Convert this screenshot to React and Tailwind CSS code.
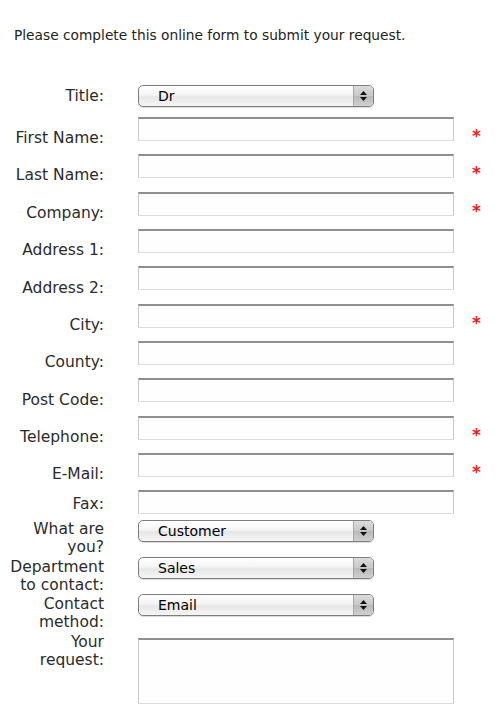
import React from "react";

const font = { fontFamily: '"DejaVu Sans", Verdana, sans-serif' };

function TextInput() {
  return (
    <div className="w-[316px] h-[24px] bg-[#fefefe] border border-[#c9c9c9] border-t-2 border-t-[#8f8f8f] border-b-[#dcdcdc]" />
  );
}

function Select({ value }) {
  return (
    <div className="relative w-[236px] h-[22px] rounded-[5px] border border-[#7d7d7d] bg-[linear-gradient(#ffffff,#f4f4f4_45%,#e6e6e6_55%,#f6f6f6)] shadow-[0_1px_1px_rgba(0,0,0,0.15)] flex items-center overflow-hidden">
      <span className="pl-[19px] text-[14px] leading-[18px] text-black flex-1">{value}</span>
      <div className="w-[20px] h-full border-l border-[#a8a8a8] bg-[linear-gradient(#dcdcdc,#c8c8c8_50%,#b9b9b9_51%,#d0d0d0)] flex flex-col items-center justify-center gap-[2px]">
        <svg width="7" height="4" viewBox="0 0 7 4"><path d="M3.5 0 L7 4 L0 4 Z" fill="#111" /></svg>
        <svg width="7" height="4" viewBox="0 0 7 4"><path d="M0 0 L7 0 L3.5 4 Z" fill="#111" /></svg>
      </div>
    </div>
  );
}

function Row({ h, label, labelCls, ctrlCls, children, req }) {
  return (
    <div className={"flex items-start " + h}>
      <div className={"w-[104px] shrink-0 text-right text-[15.5px] leading-[18px] text-[#2b2b2b] " + labelCls}>{label}</div>
      <div className={"ml-[34px] " + ctrlCls}>{children}</div>
      {req && <div className="ml-[18px] mt-[10px] text-[17px] leading-[18px] font-bold text-[#ff1a1a]">*</div>}
    </div>
  );
}

export default function App() {
  return (
    <div className="w-[500px] h-[709px] bg-white overflow-hidden" style={font}>
      <p className="pt-[26px] pl-[14px] text-[13.75px] leading-[18px] text-[#222]">
        Please complete this online form to submit your request.
      </p>
      <div className="mt-[41px] flex flex-col">
        <Row h="h-[32px]" label="Title:" labelCls="mt-[2px]" ctrlCls=""><Select value="Dr" /></Row>
        <Row h="h-[37px]" label="First Name:" labelCls="mt-[12px]" ctrlCls="" req><TextInput /></Row>
        <Row h="h-[38px]" label="Last Name:" labelCls="mt-[12px]" ctrlCls="" req><TextInput /></Row>
        <Row h="h-[37px]" label="Company:" labelCls="mt-[12px]" ctrlCls="" req><TextInput /></Row>
        <Row h="h-[37px]" label="Address 1:" labelCls="mt-[12px]" ctrlCls=""><TextInput /></Row>
        <Row h="h-[38px]" label="Address 2:" labelCls="mt-[13px]" ctrlCls=""><TextInput /></Row>
        <Row h="h-[37px]" label="City:" labelCls="mt-[12px]" ctrlCls="" req><TextInput /></Row>
        <Row h="h-[37px]" label="County:" labelCls="mt-[12px]" ctrlCls=""><TextInput /></Row>
        <Row h="h-[38px]" label="Post Code:" labelCls="mt-[13px]" ctrlCls=""><TextInput /></Row>
        <Row h="h-[37px]" label="Telephone:" labelCls="mt-[12px]" ctrlCls="" req><TextInput /></Row>
        <Row h="h-[37px]" label="E-Mail:" labelCls="mt-[12px]" ctrlCls="" req><TextInput /></Row>
        <Row h="h-[29px]" label="Fax:" labelCls="mt-[5px]" ctrlCls=""><TextInput /></Row>
        <Row h="h-[38px]" label={<>What are<br />you?</>} labelCls="mt-[1px]" ctrlCls="mt-[1px]"><Select value="Customer" /></Row>
        <Row h="h-[37px]" label={<>Department<br />to contact:</>} labelCls="mt-[1px]" ctrlCls=""><Select value="Sales" /></Row>
        <Row h="h-[38px]" label={<>Contact<br />method:</>} labelCls="mt-[1px]" ctrlCls=""><Select value="Email" /></Row>
        <Row h="h-[80px]" label={<>Your<br />request:</>} labelCls="mt-[1px]" ctrlCls="mt-[6px]">
          <div className="w-[316px] h-[66px] bg-[#fefefe] border border-[#c9c9c9] border-t-2 border-t-[#8f8f8f] border-b-[#dcdcdc]" />
        </Row>
      </div>
    </div>
  );
}
